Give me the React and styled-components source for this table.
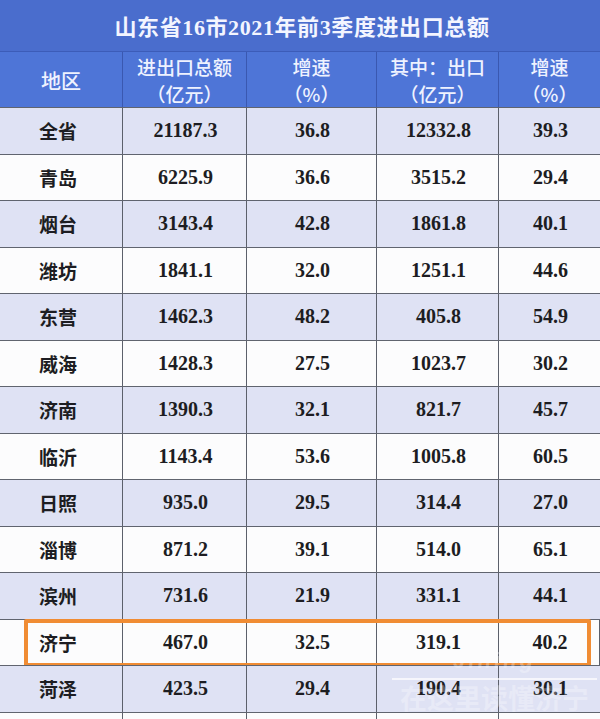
import styled, { createGlobalStyle } from "styled-components";

const GlobalStyle = createGlobalStyle`
  html, body {
    margin: 0;
    padding: 0;
    background: #ffffff;
  }
`;

// -----------------------------------------------------
const columns = "123px 124px 130px 122px 101px";

const headers = [
  ["地区"],
  ["进出口总额", "（亿元）"],
  ["增速", "（%）"],
  ["其中：出口", "（亿元）"],
  ["增速", "（%）"],
];

const rows = [
  ["全省", "21187.3", "36.8", "12332.8", "39.3"],
  ["青岛", "6225.9", "36.6", "3515.2", "29.4"],
  ["烟台", "3143.4", "42.8", "1861.8", "40.1"],
  ["潍坊", "1841.1", "32.0", "1251.1", "44.6"],
  ["东营", "1462.3", "48.2", "405.8", "54.9"],
  ["威海", "1428.3", "27.5", "1023.7", "30.2"],
  ["济南", "1390.3", "32.1", "821.7", "45.7"],
  ["临沂", "1143.4", "53.6", "1005.8", "60.5"],
  ["日照", "935.0", "29.5", "314.4", "27.0"],
  ["淄博", "871.2", "39.1", "514.0", "65.1"],
  ["滨州", "731.6", "21.9", "331.1", "44.1"],
  ["济宁", "467.0", "32.5", "319.1", "40.2"],
  ["菏泽", "423.5", "29.4", "190.4", "30.1"],
  ["", "", "", "", ""],
];

const App = () => {
  return (
    <>
      <GlobalStyle />
      <Page>
        <Title>山东省16市2021年前3季度进出口总额</Title>
        <HeaderRow>
          {headers.map((lines, i) => (
            <HeaderCell key={i} $single={lines.length === 1}>
              {lines.map((l, j) => (
                <span key={j}>{l}</span>
              ))}
            </HeaderCell>
          ))}
        </HeaderRow>
        {rows.map((r, i) => (
          <Row key={i} $alt={i % 2 === 0}>
            {r.map((v, j) => (
              <Cell key={j} $label={j === 0}>
                {v}
              </Cell>
            ))}
            {r[0] === "济宁" && <Highlight />}
          </Row>
        ))}
        <Watermark>
          <small>Jining</small>
          <span>在这里读懂济宁</span>
        </Watermark>
      </Page>
    </>
  );
};
export default App;

const Page = styled.div`
  position: relative;
  width: 600px;
  height: 719px;
  overflow: hidden;
  background: #fdfdfd;
  font-family: "Liberation Serif", "Noto Sans CJK SC", serif;
`;

const Title = styled.div`
  height: 52px;
  display: flex;
  align-items: center;
  justify-content: center;
  padding-bottom: 2px;
  box-sizing: border-box;
  background: #4a6dcd;
  border-bottom: 1px solid #3c5cb8;
  color: #f3f5ff;
  font-size: 22px;
  font-weight: 700;
  letter-spacing: 0.6px;
  padding-left: 4px;
`;

const HeaderRow = styled.div`
  display: grid;
  grid-template-columns: ${columns};
  height: 55px;
  background: #4e75d7;
`;

const HeaderCell = styled.div`
  display: flex;
  flex-direction: column;
  align-items: center;
  justify-content: center;
  border-right: 1px solid #3a58b0;
  color: #eef2ff;
  font-family: "Noto Sans CJK SC", sans-serif;
  font-size: ${(p) => (p.$single ? "20px" : "19px")};
  font-weight: 500;
  line-height: 27px;
  padding-top: 1px;
  &:last-child {
    border-right: none;
  }
`;

const Row = styled.div`
  position: relative;
  display: grid;
  grid-template-columns: ${columns};
  height: 46.5px;
  box-sizing: border-box;
  border-top: 1px solid #60646f;
  background: ${(p) => (p.$alt ? "#dfe2f4" : "#fcfcfd")};
`;

const Cell = styled.div`
  display: flex;
  align-items: center;
  justify-content: center;
  border-right: 1px solid #5c606b;
  color: #1d1d22;
  font-size: ${(p) => (p.$label ? "19px" : "20px")};
  font-weight: 700;
  font-family: ${(p) =>
    p.$label
      ? `"Noto Sans CJK SC", sans-serif`
      : `"Liberation Serif", "Noto Sans CJK SC", serif`};
  padding-left: ${(p) => (p.$label ? "0" : "2px")};
  padding-right: ${(p) => (p.$label ? "6px" : "0")};
  &:last-child {
    border-right: none;
  }
`;

const Highlight = styled.div`
  position: absolute;
  left: 24px;
  right: 9px;
  top: -1px;
  bottom: -2px;
  border: 4px solid #f08c34;
  border-radius: 2px;
  pointer-events: none;
`;

const Watermark = styled.div`
  position: absolute;
  left: 392px;
  top: 648px;
  width: 205px;
  display: flex;
  flex-direction: column;
  align-items: center;
  pointer-events: none;
  small {
    font-family: "Liberation Sans", sans-serif;
    font-style: italic;
    font-weight: 700;
    font-size: 22px;
    letter-spacing: 3px;
    color: rgba(255, 255, 255, 0.28);
    height: 30px;
    border-bottom: 2px solid rgba(255, 255, 255, 0.7);
    width: 100%;
    text-align: center;
  }
  span {
    font-family: "Noto Sans CJK SC", sans-serif;
    font-weight: 700;
    font-size: 27px;
    line-height: 36px;
    color: rgba(255, 255, 255, 0.28);
  }
`;
